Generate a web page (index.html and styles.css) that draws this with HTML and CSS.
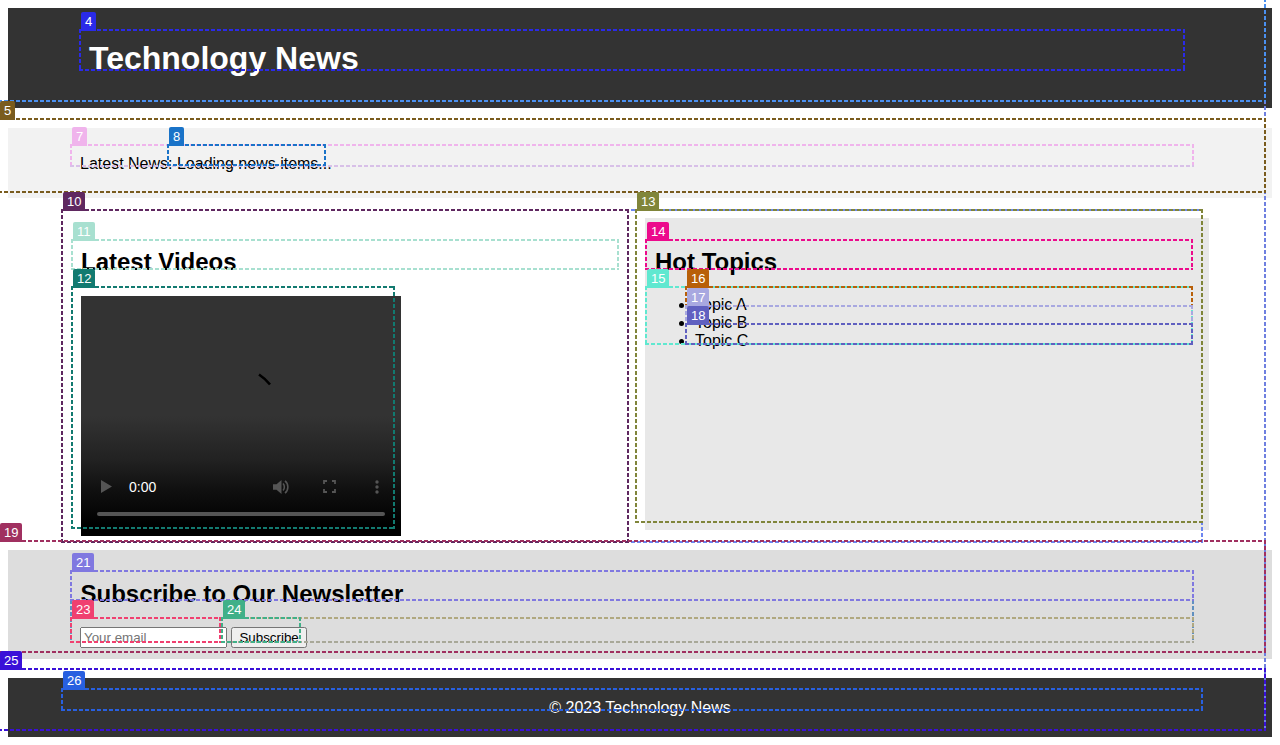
FILE: index.html
```html
<!DOCTYPE html>
<html lang="en">
<head>
<meta charset="utf-8">
<title>Technology News</title>
<link rel="stylesheet" href="styles.css">
</head>
<body>
<header class="site-header">
  <h1>Technology News</h1>
</header>
<section class="ticker">
  <p>Latest News: <span>Loading news items...</span></p>
</section>
<main class="content">
  <article class="videos">
    <h2>Latest Videos</h2>
    <div class="video">
      <svg class="spinner" width="14" height="14" viewBox="0 0 14 14"><path d="M1 1.5 C4 3.5 8 6.5 12 11.5" fill="none" stroke="#000" stroke-width="2.6"/></svg>
      <div class="controls">
        <svg class="ic-play" width="11" height="13" viewBox="0 0 11 13"><path d="M0 0 L11 6.5 L0 13 Z" fill="#555"/></svg>
        <span class="time">0:00</span>
        <svg class="ic-vol" width="16" height="16" viewBox="0 0 16 16"><path d="M0 5.2 H3.5 L8.5 1 V15 L3.5 10.8 H0 Z" fill="#555"/><path d="M10 4.5 C11.8 6.2 11.8 9.8 10 11.5 M12 1.8 C15.8 4.8 15.8 11.2 12 14.2" fill="none" stroke="#555" stroke-width="1.6"/></svg>
        <svg class="ic-full" width="13" height="13" viewBox="0 0 13 13"><path d="M1 4 V1 H4 M9 1 H12 V4 M12 9 V12 H9 M4 12 H1 V9" fill="none" stroke="#555" stroke-width="1.8"/></svg>
        <svg class="ic-more" width="4" height="14" viewBox="0 0 4 14"><circle cx="2" cy="2" r="1.7" fill="#555"/><circle cx="2" cy="7" r="1.7" fill="#555"/><circle cx="2" cy="12" r="1.7" fill="#555"/></svg>
      </div>
      <div class="track"></div>
    </div>
  </article>
  <aside class="topics">
    <h2>Hot Topics</h2>
    <ul>
      <li>Topic A</li>
      <li>Topic B</li>
      <li>Topic C</li>
    </ul>
  </aside>
</main>
<section class="subscribe">
  <h2>Subscribe to Our Newsletter</h2>
  <form class="sub-form">
    <input type="email" placeholder="Your email">
    <button type="button">Subscribe</button>
  </form>
</section>
<footer class="site-footer">
  <div class="footer-inner">© 2023 Technology News</div>
</footer>

<div class="overlays">
  <div class="ov ov-body"></div>
  <div class="ov ov-head"></div>
  <div class="ov ov-4"><span class="tag">4</span></div>
  <div class="ov ov-5"><span class="tag">5</span></div>
  <div class="ov ov-7"><span class="tag">7</span></div>
  <div class="ov ov-8"><span class="tag">8</span></div>
  <div class="ov ov-9"></div>
  <div class="ov ov-10"><span class="tag">10</span></div>
  <div class="ov ov-11"><span class="tag">11</span></div>
  <div class="ov ov-12"><span class="tag">12</span></div>
  <div class="ov ov-13"><span class="tag">13</span></div>
  <div class="ov ov-14"><span class="tag">14</span></div>
  <div class="ov ov-15"><span class="tag">15</span></div>
  <div class="ov ov-16"><span class="tag">16</span></div>
  <div class="ov ov-17"><span class="tag">17</span></div>
  <div class="ov ov-18"><span class="tag">18</span></div>
  <div class="ov ov-19"><span class="tag">19</span></div>
  <div class="ov ov-20"></div>
  <div class="ov ov-22"></div>
  <div class="ov ov-21"><span class="tag">21</span></div>
  <div class="ov ov-23"><span class="tag">23</span></div>
  <div class="ov ov-24"><span class="tag">24</span></div>
  <div class="ov ov-25"><span class="tag">25</span></div>
  <div class="ov ov-26"><span class="tag">26</span></div>
</div>
</body>
</html>
```
FILE: styles.css
```css
html, body { background: #fff; }
body {
  margin: 8px;
  font-family: "Liberation Sans", Arial, sans-serif;
  font-size: 16px;
  color: #000;
}

.site-header {
  background: #333;
  color: #fff;
  padding: 10px 80px;
  margin-bottom: 20px;
}
.site-header h1 {
  font-size: 32px;
  margin: 22.44px 0 20.44px;
  padding-left: 1px;
}

.ticker {
  background: #f2f2f2;
  padding: 10px 72px;
  margin-bottom: 20px;
}
.ticker p { margin: 17px 0 15px; }

.content {
  display: flex;
  gap: 8px;
  align-items: flex-start;
  width: 1140px;
  margin: 0 auto;
}
.videos, .topics {
  padding: 10px;
  box-sizing: border-box;
}
.videos { flex: 0 0 566px; }
.topics {
  flex: 0 0 564px;
  margin: 0 1px;
  height: 312px;
  background: #e8e8e8;
}

.videos h2, .topics h2 {
  font-size: 24px;
  margin: 20.5px 0 19.3px;
}
.videos h2 { padding-left: 1px; }
.subscribe h2 {
  font-size: 24px;
  margin: 19.92px 0 19px;
  padding-left: 0.5px;
}
.topics ul { padding-left: 40px; }

.video {
  position: relative;
  width: 320px;
  height: 240px;
  margin: 0 0 4.6px 1px;
  display: flex;
  flex-direction: column;
  justify-content: flex-end;
  background: linear-gradient(#333 0, #333 50%, #222 68%, #111 80%, #000 95%);
}
.spinner { position: absolute; left: 177px; top: 77px; }
.controls {
  display: flex;
  align-items: center;
  height: 16px;
  padding: 0 22px 0 20px;
  margin-bottom: 17px;
}
.ic-play { margin-right: 17px; }
.time {
  color: #fff;
  font-size: 14px;
  line-height: 16px;
}
.ic-vol { margin-left: auto; margin-right: 34px; }
.ic-full { margin-right: 39px; }
.track {
  height: 4px;
  margin: 0 16px 20px;
  border-radius: 2px;
  background: #555;
}

.subscribe {
  background: #ddd;
  padding: 10px 72px 11px;
  margin-bottom: 19px;
}
.sub-form input, .sub-form button { font-family: "Liberation Sans", Arial, sans-serif; }
.sub-form input { width: 147px; box-sizing: border-box; }

.site-footer {
  background: #333;
  color: #fff;
  padding: 21px 0 20px;
}
.footer-inner {
  width: 1140px;
  margin: 0 auto;
  text-align: center;
}

/* annotation boxes drawn over the page */
.overlays { position: absolute; left: 0; top: 0; width: 1280px; height: 745px; overflow: hidden; pointer-events: none; }
.ov {
  --b: var(--c);
  position: absolute;
  background:
    repeating-linear-gradient(90deg, var(--c) 0 4px, transparent 4px 6px) 0 0 / 100% 2px no-repeat,
    repeating-linear-gradient(90deg, var(--b) 0 4px, transparent 4px 6px) 0 100% / 100% 2px no-repeat,
    repeating-linear-gradient(180deg, var(--c) 0 4px, transparent 4px 6px) 0 0 / 2px 100% no-repeat,
    repeating-linear-gradient(180deg, var(--c) 0 4px, transparent 4px 6px) 100% 0 / 2px 100% no-repeat;
}
.tag {
  position: absolute;
  left: 2px;
  bottom: calc(100% - 2px);
  padding: 0 4px;
  height: 19px;
  line-height: 19px;
  font-size: 13px;
  color: #fff;
  background: var(--c);
  border-radius: 2px 2px 0 0;
}

.ov-body { --c: #6f80e0; left: -2px; top: -8px; width: 1268px; height: 739px; }
.ov-head { --c: #4a90f0; left: -2px; top: -8px; width: 1268px; height: 110px; }
.ov-4  { --c: #2a2ae8; left: 79px;  top: 29px;  width: 1106px; height: 42px; }
.ov-5  { --c: #7a5c1e; left: -2px;  top: 118px; width: 1268px; height: 75px; }
.ov-7  { --c: #f0b4ec; --b: #d8c0e8; left: 70px;  top: 144px; width: 1124px; height: 23px; }
.ov-8  { --c: #1a73c8; left: 167px; top: 144px; width: 159px;  height: 22px; }
.ov-9  { --c: #6d86f0; left: 61px;  top: 209px; width: 1142px; height: 334px; }
.ov-10 { --c: #5f2860; left: 61px;  top: 209px; width: 568px;  height: 334px; }
.ov-11 { --c: #a8e0d0; left: 71px;  top: 239px; width: 548px;  height: 31px; }
.ov-12 { --c: #127a70; left: 71px;  top: 286px; width: 324px;  height: 243px; }
.ov-13 { --c: #80853a; left: 635px; top: 209px; width: 568px;  height: 314px; }
.ov-14 { --c: #ec0a8c; left: 645px; top: 239px; width: 548px;  height: 31px; }
.ov-15 { --c: #60e8d0; left: 645px; top: 286px; width: 548px;  height: 59px; }
.ov-16 { --c: #b85f08; left: 685px; top: 286px; width: 508px;  height: 21px; }
.ov-17 { --c: #a8a8e0; left: 685px; top: 305px; width: 508px;  height: 20px; }
.ov-18 { --c: #6060c0; left: 685px; top: 323px; width: 508px;  height: 22px; }
.ov-19 { --c: #a03060; left: -2px;  top: 540px; width: 1268px; height: 113px; }
.ov-20 { --c: #6090c0; left: 70px;  top: 570px; width: 1124px; height: 73px; }
.ov-21 { --c: #8078e0; left: 70px;  top: 570px; width: 1124px; height: 31px; }
.ov-22 { --c: #b0a880; --b: #a8a898; left: 70px;  top: 617px; width: 1124px; height: 26px; }
.ov-23 { --c: #f04070; left: 70px;  top: 617px; width: 151px;  height: 26px; }
.ov-24 { --c: #40b088; left: 221px; top: 617px; width: 80px;   height: 26px; }
.ov-25 { --c: #3a10d8; left: -2px;  top: 668px; width: 1268px; height: 63px; }
.ov-26 { --c: #2860e0; left: 61px;  top: 688px; width: 1142px; height: 23px; }
```
